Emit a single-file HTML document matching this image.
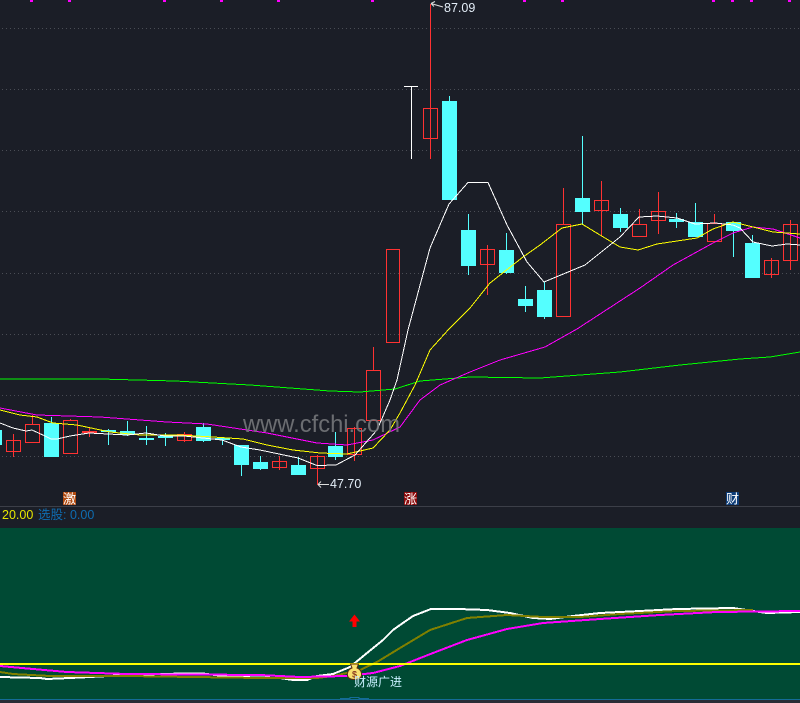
<!DOCTYPE html>
<html><head><meta charset="utf-8"><style>
html,body{margin:0;padding:0;background:#1b1e27;width:800px;height:703px;overflow:hidden}
svg{display:block;position:absolute;left:0;top:0}
text{font-family:"Liberation Sans","Noto Sans CJK SC",sans-serif}
.r{fill:none;stroke:#ff3232;stroke-width:1}
.w{stroke:#ff3232;stroke-width:1}
.c{fill:#54ffff}
.cw{stroke:#54ffff;stroke-width:1}
.g{stroke:#4a4d55;stroke-width:1;stroke-dasharray:1 3}
.l{fill:none;shape-rendering:crispEdges}
</style></head><body>
<svg width="800" height="703" viewBox="0 0 800 703" xmlns="http://www.w3.org/2000/svg">
<rect width="800" height="703" fill="#1b1e27"/>
<g shape-rendering="crispEdges">
<g class="g">
<line x1="2" x2="800" y1="28.5" y2="28.5"/><line x1="2" x2="800" y1="89.5" y2="89.5"/><line x1="2" x2="800" y1="150.5" y2="150.5"/><line x1="2" x2="800" y1="211.5" y2="211.5"/><line x1="2" x2="800" y1="273.5" y2="273.5"/><line x1="2" x2="800" y1="334.5" y2="334.5"/><line x1="2" x2="800" y1="395.5" y2="395.5"/><line x1="2" x2="800" y1="456.5" y2="456.5"/>
</g>
<g fill="#ff00ff">
<rect x="30" width="3" height="2"/><rect x="68" width="3" height="2"/><rect x="163" width="3" height="2"/><rect x="220" width="3" height="2"/><rect x="277" width="3" height="2"/><rect x="371" width="3" height="2"/><rect x="523" width="3" height="2"/><rect x="561" width="3" height="2"/><rect x="712" width="3" height="2"/><rect x="731" width="3" height="2"/><rect x="750" width="3" height="2"/><rect x="788" width="3" height="2"/>
</g>
<!-- wicks -->
<g class="w">
<line x1="13.5" x2="13.5" y1="434" y2="457"/><line x1="32.5" x2="32.5" y1="415" y2="424"/><line x1="70.5" x2="70.5" y1="419" y2="421"/><line x1="89.5" x2="89.5" y1="428" y2="437"/><line x1="184.5" x2="184.5" y1="432" y2="442"/><line x1="279.5" x2="279.5" y1="456" y2="470"/><line x1="317.5" x2="317.5" y1="455" y2="485"/><line x1="354.5" x2="354.5" y1="427" y2="461"/><line x1="373.5" x2="373.5" y1="347" y2="370"/><line x1="430.5" x2="430.5" y1="4" y2="159"/><line x1="487.5" x2="487.5" y1="245" y2="295"/><line x1="563.5" x2="563.5" y1="188" y2="224"/><line x1="601.5" x2="601.5" y1="181" y2="236"/><line x1="639.5" x2="639.5" y1="209" y2="224"/><line x1="658.5" x2="658.5" y1="192" y2="234"/><line x1="714.5" x2="714.5" y1="214" y2="223"/><line x1="771.5" x2="771.5" y1="258" y2="278"/><line x1="790.5" x2="790.5" y1="220" y2="270"/>
</g>
<g class="cw">
<line x1="51.5" x2="51.5" y1="417" y2="424"/><line x1="108.5" x2="108.5" y1="429" y2="445"/><line x1="127.5" x2="127.5" y1="421" y2="436"/><line x1="146.5" x2="146.5" y1="426" y2="445"/><line x1="165.5" x2="165.5" y1="433" y2="446"/><line x1="203.5" x2="203.5" y1="423" y2="442"/><line x1="222.5" x2="222.5" y1="437" y2="445"/><line x1="241.5" x2="241.5" y1="445" y2="476"/><line x1="260.5" x2="260.5" y1="456" y2="470"/><line x1="298.5" x2="298.5" y1="457" y2="475"/><line x1="335.5" x2="335.5" y1="432" y2="460"/><line x1="449.5" x2="449.5" y1="96" y2="102"/><line x1="468.5" x2="468.5" y1="214" y2="275"/><line x1="506.5" x2="506.5" y1="233" y2="274"/><line x1="525.5" x2="525.5" y1="286" y2="312"/><line x1="544.5" x2="544.5" y1="282" y2="319"/><line x1="582.5" x2="582.5" y1="136" y2="225"/><line x1="620.5" x2="620.5" y1="208" y2="232"/><line x1="676.5" x2="676.5" y1="213" y2="228"/><line x1="695.5" x2="695.5" y1="203" y2="237"/><line x1="733.5" x2="733.5" y1="222" y2="257"/><line x1="752.5" x2="752.5" y1="235" y2="243"/>
</g>
<!-- red hollow bodies -->
<g class="r">
<rect x="6.5" y="440.5" width="14" height="11"/><rect x="25.5" y="424.5" width="14" height="18"/><rect x="63.5" y="420.5" width="14" height="33"/><rect x="177.5" y="434.5" width="14" height="6"/><rect x="272.5" y="461.5" width="14" height="6"/><rect x="310.5" y="456.5" width="14" height="12"/><rect x="347.5" y="428.5" width="14" height="26"/><rect x="366.5" y="370.5" width="14" height="50"/><rect x="386.5" y="249.5" width="13" height="93"/><rect x="423.5" y="108.5" width="14" height="30"/><rect x="480.5" y="249.5" width="14" height="15"/><rect x="556.5" y="224.5" width="14" height="92"/><rect x="594.5" y="200.5" width="14" height="10"/><rect x="632.5" y="224.5" width="14" height="12"/><rect x="651.5" y="211.5" width="14" height="9"/><rect x="707.5" y="223.5" width="14" height="18"/><rect x="764.5" y="260.5" width="14" height="14"/><rect x="783.5" y="224.5" width="14" height="36"/>
</g>
<rect x="82" y="431" width="15" height="2" fill="#ff3232"/>
<!-- cyan bodies -->
<g class="c">
<rect x="0" y="430" width="2" height="15"/><rect x="44" y="423" width="15" height="34"/><rect x="101" y="430" width="15" height="2"/><rect x="120" y="431" width="15" height="4"/><rect x="139" y="438" width="15" height="2"/><rect x="158" y="436" width="15" height="2"/><rect x="196" y="427" width="15" height="14"/><rect x="215" y="438" width="15" height="2"/><rect x="234" y="445" width="15" height="20"/><rect x="253" y="462" width="15" height="7"/><rect x="291" y="465" width="15" height="10"/><rect x="328" y="446" width="15" height="11"/><rect x="442" y="101" width="15" height="99"/><rect x="461" y="230" width="15" height="36"/><rect x="499" y="250" width="15" height="23"/><rect x="518" y="299" width="15" height="7"/><rect x="537" y="290" width="15" height="27"/><rect x="575" y="198" width="15" height="14"/><rect x="613" y="214" width="15" height="14"/><rect x="669" y="219" width="15" height="3"/><rect x="688" y="222" width="15" height="15"/><rect x="726" y="222" width="15" height="9"/><rect x="745" y="243" width="15" height="35"/>
</g>
<!-- white T -->
<line x1="404" x2="418" y1="86.5" y2="86.5" stroke="#fff"/><line x1="411.5" x2="411.5" y1="87" y2="159" stroke="#fff"/>
</g>
<!-- MA lines -->
<polyline class="l" stroke="#00ff00" stroke-width="1" points="0,379 100,379 175,381 250,385 330,391 360,392 395,389 420,381 470,377 540,378 620,372 680,365 740,359 770,357 800,352"/>
<polyline class="l" stroke="#ff00ff" stroke-width="1" points="0,408 37,415 100,417 167,422 207,424 267,433 317,443 347,445 373,440 400,427 420,400 440,385 470,372 500,360 545,347 577,329 640,288 673,265 713,243 733,233 753,227 773,229 800,238"/>
<polyline class="l" stroke="#ffff00" stroke-width="1" points="0,410 20,415 37,417 53,423 77,425 110,432 140,435 180,435 213,437 243,439 267,445 293,450 320,453 347,454 373,448 390,430 400,413 415,385 430,350 449,329 470,308 490,283 523,257 540,245 562,228 582,224 600,235 620,247 638,250 657,244 697,238 713,229 733,222 753,227 773,232 800,234"/>
<polyline class="l" stroke="#ffffff" stroke-width="1" points="0,423 13,428 26,431 32,430 45,436 51,439 57,439 70,436 89,433 108,434 127,435 146,433 165,436 184,436 203,438 222,440 241,447 260,450 279,454 298,458 317,465.5 336,465 355,455 377,430 390,400 397,380 408,330 430,248 449,204 468,182.5 488,182.5 507,225 527,262 544,282 585,265 600,253 620,237 639,217 657,216 677,218 695,224 715,223 733,225 740,228 753,242 772,246 787,244 800,245"/>
<!-- watermark -->
<text x="243" y="432" font-size="24" fill="#74767a" fill-opacity="0.9" textLength="157" lengthAdjust="spacingAndGlyphs">www.cfchi.com</text>
<!-- price labels -->
<path d="M443,7 L431,3.5 M431,3.5 l4,-2 M431,3.5 l3,3" stroke="#ddd" stroke-width="1" fill="none"/>
<text x="444" y="12" font-size="12.5" fill="#e4eef8">87.09</text>
<path d="M329,484.5 H318 M318,484.5 l3,-3 M318,484.5 l3,3" stroke="#ddd" stroke-width="1" fill="none"/>
<text x="330" y="488" font-size="12.5" fill="#e4eef8">47.70</text>
<!-- signal chars -->
<rect x="63" y="492" width="13" height="13" fill="#b04a10"/>
<text x="63" y="503.5" font-size="13" fill="#fff">激</text>
<rect x="404" y="492" width="13" height="13" fill="#8c0a0a"/>
<text x="404" y="503.5" font-size="13" fill="#fff">涨</text>
<rect x="726" y="492" width="13" height="13" fill="#0c3c78"/>
<text x="726" y="503.5" font-size="13" fill="#fff">财</text>
<!-- divider / header -->
<rect x="0" y="506" width="800" height="1" fill="#3c3f48"/>
<text x="2" y="519" font-size="12.5" fill="#e6e600">20.00</text>
<text x="38" y="519" font-size="12.5" fill="#0f6cb0">选股: 0.00</text>
<!-- lower panel -->
<rect x="0" y="528" width="800" height="171" fill="#004a34"/>
<rect x="0" y="699" width="800" height="1" fill="#146c96"/>
<rect x="0" y="700" width="800" height="3" fill="#2a2d36"/>
<path d="M340,698.5 H350 V697.5 H359 V698.5 H369" stroke="#146c96" fill="none" shape-rendering="crispEdges"/>
<polyline class="l" stroke="#ffffff" stroke-width="2" points="0,677 40,678 47,679 70,678 90,677 127,675 183,673.5 203,673.5 223,676 240,677 280,678 293,680 307,680 317,676 333,674 350,667 367,653 383,640 393,630 400,625 413,616 431,609 458,609 487,610 510,613 533,618 550,619 573,616 600,613 640,611 677,609 733,608 753,611 767,613 800,612"/>
<polyline class="l" stroke="#808000" stroke-width="2" points="0,672 13,674 50,676 127,676 260,678 317,678 333,676 360,670 377,662 400,648 430,630 467,618 507,615 543,617 580,617 620,614 677,611 753,610"/>
<polyline class="l" stroke="#ff00ff" stroke-width="2" points="0,666 33,669 67,672 127,674 260,675 300,677 347,676 373,673 400,666 433,653 467,640 507,629 543,623 600,619 660,615 717,612 800,611"/>
<rect x="0" y="663" width="800" height="2" fill="#ffff00"/>
<!-- red arrow -->
<path d="M354.5,614.5 L360,621.5 H356.5 V627 H352.5 V621.5 H349 Z" fill="#ff0000"/>
<!-- money bag -->
<path d="M350.5,664 H358.5 L357,668 C361,669.5 362,673 361.5,675.5 C361,678.5 358,679.5 354.5,679.5 C351,679.5 348,678.5 347.5,675.5 C347,673 348,669.5 352,668 Z" fill="#f8e070" stroke="#5a2a10" stroke-width="1"/>
<text x="354.5" y="677.5" font-size="9" font-weight="bold" text-anchor="middle" fill="#8a3a20">$</text>
<text x="354" y="686" font-size="12" fill="#c8f0ff">财源广进</text>
</svg>
</body></html>
